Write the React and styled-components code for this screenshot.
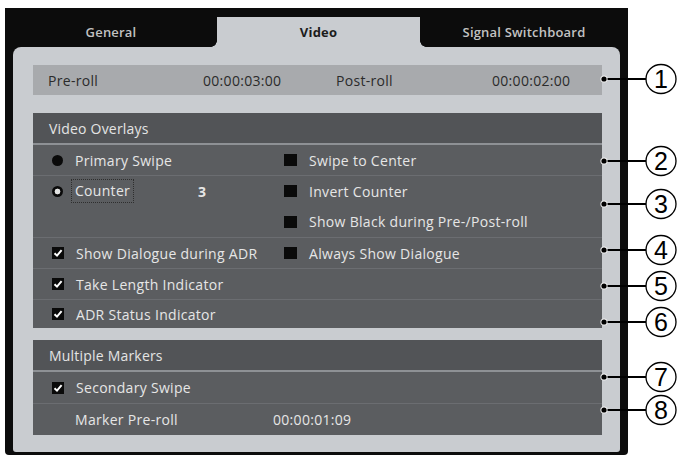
import React from 'react';
import styled, { createGlobalStyle, css } from 'styled-components';

const LIGHT = '#c9ccd0';
const FRAME = '#0c0c0c';

const Global = createGlobalStyle`
  html, body { margin: 0; padding: 0; background: #ffffff; }
  body { font-family: "Open Sans", "Liberation Sans", sans-serif; }
  * { box-sizing: border-box; }
`;

const Page = styled.div`
  position: relative;
  width: 684px;
  height: 459px;
  overflow: hidden;
  padding: 8px 0 0 5px;
`;

const Frame = styled.div`
  width: 623px;
  height: 447px;
  background: ${FRAME};
  display: flex;
  flex-direction: column;
  border-radius: 0 0 4px 4px;
`;

const TabRow = styled.div`
  display: flex;
  height: 39px;
  flex: none;
`;

const Tab = styled.div`
  flex: 0 0 ${(p) => p.$w}px;
  position: relative;
  display: flex;
  justify-content: center;
  font-size: 13px;
  letter-spacing: 0.2px;
  ${(p) =>
    p.$active
      ? css`
          margin-top: 9px;
          background: ${LIGHT};
          color: #1c1c1c;
          font-weight: 700;
          align-items: center;
          &::before,
          &::after {
            content: '';
            position: absolute;
            bottom: 0;
            width: 6px;
            height: 6px;
          }
          &::before {
            left: -6px;
            background: radial-gradient(circle at 0 0, transparent 5.5px, ${LIGHT} 6px);
          }
          &::after {
            right: -6px;
            background: radial-gradient(circle at 100% 0, transparent 5.5px, ${LIGHT} 6px);
          }
        `
      : css`
          color: #c2c2c2;
          font-weight: 600;
          padding-top: 15px;
          line-height: 18px;
        `}
`;

const Body = styled.div`
  flex: 1;
  display: flex;
  padding: 0 8px 3px 8px;
`;

const Panel = styled.div`
  flex: 1;
  background: ${LIGHT};
  border-radius: 8px 8px 3px 3px;
  padding: 18px 18px 17px 20px;
  display: flex;
  flex-direction: column;
`;

const RollBar = styled.div`
  height: 30px;
  flex: none;
  background: #a8aaad;
  display: grid;
  grid-template-columns: 155px 133px 156px 1fr;
  align-items: center;
  padding: 0 28px 0 15px;
  font-size: 14px;
  letter-spacing: 0.3px;
  color: #2b2b2b;
  margin-bottom: 18px;
`;

const Section = styled.div`
  display: flex;
  flex-direction: column;
  margin-bottom: ${(p) => p.$mb || 0}px;
`;

const SectionHeader = styled.div`
  height: 32px;
  background: #525457;
  color: #e4e4e4;
  font-size: 14px;
  letter-spacing: 0.2px;
  display: flex;
  align-items: center;
  padding-left: 16px;
  border-bottom: 2px solid #8e9195;
`;

const Row = styled.div`
  height: ${(p) => p.$h}px;
  display: grid;
  grid-template-columns: ${(p) => p.$cols || '232px 1fr'};
  grid-auto-rows: 1fr;
  align-items: center;
  padding-left: ${(p) => p.$pl || 19}px;
  background: #5b5d60;
  color: #e6e6e6;
  font-size: 14px;
  letter-spacing: 0.3px;
  border-top: ${(p) => (p.$first ? 'none' : '1px solid #6b6d71')};
`;

const Item = styled.div`
  display: flex;
  align-items: center;
  gap: 12px;
  white-space: nowrap;
`;

const Radio = styled.span`
  width: 11px;
  height: 11px;
  border-radius: 50%;
  flex: none;
  background: ${(p) =>
    p.$on
      ? 'radial-gradient(circle, #e2e2e2 0 2.6px, #0a0a0a 3.2px)'
      : '#0a0a0a'};
`;

const Square = styled.span`
  width: 13px;
  height: 12px;
  flex: none;
  background: #0a0a0a;
  display: flex;
  align-items: center;
  justify-content: center;
`;

const CheckBox = styled(Square)`
  width: 12px;
`;

const CounterLabel = styled.span`
  margin-left: -4px;
  padding: 1px 3px;
  border: 1px dotted #2e2e2e;
  line-height: 20px;
`;

const CounterValue = styled.span`
  margin-left: 52px;
  font-weight: 700;
`;

const Overlay = styled.svg`
  position: absolute;
  left: 0;
  top: 0;
  pointer-events: none;
`;

const Check = () => (
  <CheckBox>
    <svg width="10" height="10" viewBox="0 0 10 10">
      <path d="M1.5 5.2 L4 7.6 L8.6 2.2" stroke="#ffffff" strokeWidth="2" fill="none" />
    </svg>
  </CheckBox>
);

const callouts = [
  { n: 1, y: 79 },
  { n: 2, y: 161 },
  { n: 3, y: 204 },
  { n: 4, y: 250 },
  { n: 5, y: 286 },
  { n: 6, y: 322 },
  { n: 7, y: 377 },
  { n: 8, y: 410 },
];

const Callouts = () => (
  <Overlay width="684" height="459" viewBox="0 0 684 459">
    {callouts.map((c) => (
      <g key={c.n}>
        <line x1="604" y1={c.y} x2="647" y2={c.y} stroke="#000" strokeWidth="2" />
        <circle cx="604" cy={c.y} r="3.6" fill="#f2f2f2" />
        <circle cx="604" cy={c.y} r="2.6" fill="#000" />
        <ellipse cx="661" cy={c.y} rx="15" ry="14.5" fill="#fff" stroke="#000" strokeWidth="1.3" />
        <text
          x="661"
          y={c.y + 9}
          textAnchor="middle"
          fontFamily="Liberation Sans, Arial, sans-serif"
          fontSize="25"
          fill="#000"
        >
          {c.n}
        </text>
      </g>
    ))}
  </Overlay>
);

export default function App() {
  return (
    <>
      <Global />
      <Page>
        <Frame>
          <TabRow>
            <Tab $w={212}>General</Tab>
            <Tab $w={203} $active>
              Video
            </Tab>
            <Tab $w={208}>Signal Switchboard</Tab>
          </TabRow>
          <Body>
            <Panel>
              <RollBar>
                <span>Pre-roll</span>
                <span>00:00:03:00</span>
                <span>Post-roll</span>
                <span>00:00:02:00</span>
              </RollBar>

              <Section $mb={12}>
                <SectionHeader>Video Overlays</SectionHeader>
                <Row $h={30} $first>
                  <Item>
                    <Radio />
                    Primary Swipe
                  </Item>
                  <Item>
                    <Square />
                    Swipe to Center
                  </Item>
                </Row>
                <Row $h={62}>
                  <Item>
                    <Radio $on />
                    <CounterLabel>Counter</CounterLabel>
                    <CounterValue>3</CounterValue>
                  </Item>
                  <Item>
                    <Square />
                    Invert Counter
                  </Item>
                  <span />
                  <Item>
                    <Square />
                    Show Black during Pre-/Post-roll
                  </Item>
                </Row>
                <Row $h={31}>
                  <Item>
                    <Check />
                    Show Dialogue during ADR
                  </Item>
                  <Item>
                    <Square />
                    Always Show Dialogue
                  </Item>
                </Row>
                <Row $h={31}>
                  <Item>
                    <Check />
                    Take Length Indicator
                  </Item>
                </Row>
                <Row $h={29}>
                  <Item>
                    <Check />
                    ADR Status Indicator
                  </Item>
                </Row>
              </Section>

              <Section>
                <SectionHeader>Multiple Markers</SectionHeader>
                <Row $h={31} $first>
                  <Item>
                    <Check />
                    Secondary Swipe
                  </Item>
                </Row>
                <Row $h={32} $cols="198px 1fr" $pl={42}>
                  <span>Marker Pre-roll</span>
                  <span>00:00:01:09</span>
                </Row>
              </Section>
            </Panel>
          </Body>
        </Frame>
        <Callouts />
      </Page>
    </>
  );
}
